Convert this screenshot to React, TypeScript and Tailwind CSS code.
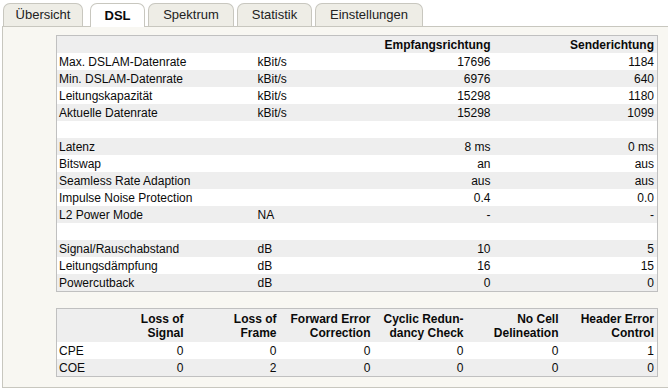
import React from "react";

const rows1: [string, string, string, string][] = [
  ["Max. DSLAM-Datenrate", "kBit/s", "17696", "1184"],
  ["Min. DSLAM-Datenrate", "kBit/s", "6976", "640"],
  ["Leitungskapazität", "kBit/s", "15298", "1180"],
  ["Aktuelle Datenrate", "kBit/s", "15298", "1099"],
  ["", "", "", ""],
  ["Latenz", "", "8 ms", "0 ms"],
  ["Bitswap", "", "an", "aus"],
  ["Seamless Rate Adaption", "", "aus", "aus"],
  ["Impulse Noise Protection", "", "0.4", "0.0"],
  ["L2 Power Mode", "NA", "-", "-"],
  ["", "", "", ""],
  ["Signal/Rauschabstand", "dB", "10", "5"],
  ["Leitungsdämpfung", "dB", "16", "15"],
  ["Powercutback", "dB", "0", "0"],
];

const tabs = [
  { label: "Übersicht", cls: "w-[80px]", active: false },
  { label: "DSL", cls: "w-[55px] ml-[7px]", active: true },
  { label: "Spektrum", cls: "w-[86px] ml-[3px]", active: false },
  { label: "Statistik", cls: "w-[75px] ml-[3px]", active: false },
  { label: "Einstellungen", cls: "w-[108px] ml-[3px]", active: false },
];

export default function App() {
  return (
    <div className="w-[668px] h-[390px] bg-white text-[#0a0a0a] font-['Liberation_Sans',Arial,sans-serif] overflow-hidden">
      <div className="flex items-end h-[26px] pl-[3px]">
        {tabs.map((t) =>
          t.active ? (
            <div
              key={t.label}
              className={`${t.cls} relative z-10 -mb-px h-[24px] flex items-center justify-center bg-white border border-b-0 border-[#c8c7bf] rounded-t-[7px] text-[13px] font-bold`}
            >
              {t.label}
            </div>
          ) : (
            <div
              key={t.label}
              className={`${t.cls} h-[23px] flex items-center justify-center bg-[#eeede6] border border-b-0 border-[#c8c7bf] rounded-t-[7px] text-[13px] text-[#222]`}
            >
              {t.label}
            </div>
          )
        )}
      </div>
      <div className="ml-[2px] h-[362px] border-l border-t border-b border-[#c8c7bf] bg-[#f8f7f2] pt-[8px] pl-[53px]">
        <table className="w-[602px] border-collapse border border-[#c0c0c0] text-[12px] table-fixed">
          <colgroup>
            <col className="w-[199px]" />
            <col className="w-[75px]" />
            <col className="w-[163px]" />
            <col />
          </colgroup>
          <thead>
            <tr className="h-[17px] bg-[#eeeeee]">
              <th />
              <th />
              <th className="text-right font-bold pr-[3px] pt-[1px] leading-[16px]">Empfangsrichtung</th>
              <th className="text-right font-bold pr-[3px] pt-[1px] leading-[16px]">Senderichtung</th>
            </tr>
          </thead>
          <tbody>
            {rows1.map((r, i) => (
              <tr key={i} className={`h-[17px] ${i % 2 === 0 ? "bg-white" : "bg-[#eeeeee]"}`}>
                <td className="p-0 pl-[2px] pt-[1px] leading-[16px]">{r[0]}</td>
                <td className="p-0 pl-[2px] pt-[1px] leading-[16px]">{r[1]}</td>
                <td className="p-0 text-right pr-[3px] pt-[1px] leading-[16px]">{r[2]}</td>
                <td className="p-0 text-right pr-[3px] pt-[1px] leading-[16px]">{r[3]}</td>
              </tr>
            ))}
          </tbody>
        </table>

        <table className="mt-[16px] w-[602px] border-collapse border border-[#c0c0c0] text-[12px] table-fixed">
          <colgroup>
            <col className="w-[36px]" />
            <col className="w-[94px]" />
            <col className="w-[93px]" />
            <col className="w-[94px]" />
            <col className="w-[93px]" />
            <col className="w-[95px]" />
            <col />
          </colgroup>
          <thead>
            <tr className="h-[33px] bg-[#eeeeee]">
              <th />
              <th className="text-right font-bold pr-[3px] pt-[2px] leading-[14px] align-middle">Loss of<br />Signal</th>
              <th className="text-right font-bold pr-[3px] pt-[2px] leading-[14px] align-middle">Loss of<br />Frame</th>
              <th className="text-right font-bold pr-[3px] pt-[2px] leading-[14px] align-middle">Forward Error<br />Correction</th>
              <th className="text-right font-bold pr-[3px] pt-[2px] leading-[14px] align-middle">Cyclic Redun-<br />dancy Check</th>
              <th className="text-right font-bold pr-[3px] pt-[2px] leading-[14px] align-middle">No Cell<br />Delineation</th>
              <th className="text-right font-bold pr-[3px] pt-[2px] leading-[14px] align-middle">Header Error<br />Control</th>
            </tr>
          </thead>
          <tbody>
            {[
              ["CPE", "0", "0", "0", "0", "0", "1"],
              ["COE", "0", "2", "0", "0", "0", "0"],
            ].map((r, i) => (
              <tr key={i} className={`h-[17px] ${i % 2 === 0 ? "bg-white" : "bg-[#eeeeee]"}`}>
                {r.map((c, j) => (
                  <td
                    key={j}
                    className={`p-0 pt-[1px] leading-[16px] ${j === 0 ? "pl-[2px]" : "text-right pr-[3px]"}`}
                  >
                    {c}
                  </td>
                ))}
              </tr>
            ))}
          </tbody>
        </table>
      </div>
    </div>
  );
}
